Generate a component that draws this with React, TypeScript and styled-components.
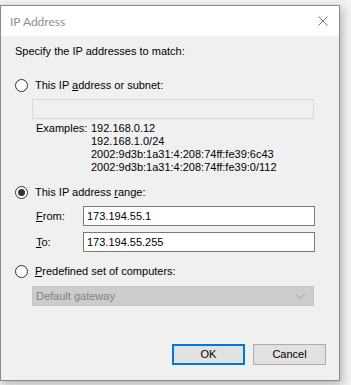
import React from "react";
import styled, { createGlobalStyle } from "styled-components";

const Global = createGlobalStyle`
  html, body { margin: 0; padding: 0; background: #f2f2f2; }
  body { font-family: "Liberation Sans", Arial, sans-serif; font-size: 11px; color: #000; }
  * { box-sizing: border-box; }
`;

const Page = styled.div`
  width: 351px;
  height: 385px;
  padding-top: 5px;
  overflow: hidden;
`;

const Dialog = styled.div`
  width: 340px;
  height: 376px;
  border: 1px solid #8a8a8a;
  background: #f0f0f0;
  box-shadow: 2px 3px 9px rgba(0, 0, 0, 0.28);
  display: flex;
  flex-direction: column;
`;

const TitleBar = styled.div`
  height: 30px;
  background: #fff;
  display: flex;
  align-items: center;
  justify-content: space-between;
  padding: 0 10px 0 9px;
  flex-shrink: 0;
`;

const Title = styled.span`
  color: #8f8f8f;
  font-family: Lato, "Liberation Sans", sans-serif;
  font-size: 12px;
  line-height: 15px;
`;

const Close = styled.svg`
  width: 10px;
  height: 10px;
  margin-right: 1px;
`;

const Client = styled.div`
  flex: 1;
  display: flex;
  flex-direction: column;
  padding: 8px 0 0 14px;
`;

const Text = styled.div<{ $mt?: number }>`
  line-height: 15px;
  height: 15px;
  margin-top: ${(p) => p.$mt ?? 0}px;
  white-space: nowrap;
`;

const RadioRow = styled.div<{ $mt: number }>`
  display: flex;
  align-items: center;
  gap: 7px;
  height: 15px;
  margin-top: ${(p) => p.$mt}px;
  line-height: 15px;
`;

const RadioCircle = styled.span<{ $checked?: boolean }>`
  width: 13px;
  height: 13px;
  border-radius: 50%;
  border: 1px solid #333;
  background: #fff;
  display: inline-flex;
  align-items: center;
  justify-content: center;
  flex-shrink: 0;
  &::after {
    content: "";
    width: 7px;
    height: 7px;
    border-radius: 50%;
    background: #333;
    display: ${(p) => (p.$checked ? "block" : "none")};
  }
`;

const U = styled.span`
  text-decoration: underline;
  text-underline-offset: 1px;
`;

const Indented = styled.div<{ $mt: number }>`
  margin-left: 17px;
  margin-top: ${(p) => p.$mt}px;
`;

const Field = styled.div<{ $disabled?: boolean; $w: number }>`
  width: ${(p) => p.$w}px;
  height: 20px;
  border: 1px solid ${(p) => (p.$disabled ? "#d9d9d9" : "#7a7a7a")};
  background: ${(p) => (p.$disabled ? "#f0f0f0" : "#fff")};
  padding: 0 3px;
  line-height: 18px;
  white-space: nowrap;
`;

const Examples = styled.div`
  display: grid;
  grid-template-columns: 55px auto;
  margin-left: 21px;
  margin-top: 3px;
  line-height: 13px;
`;

const ExampleValues = styled.div`
  display: flex;
  flex-direction: column;
`;

const RangeRow = styled.div<{ $mt: number }>`
  display: flex;
  align-items: center;
  margin-left: 21px;
  margin-top: ${(p) => p.$mt}px;
`;

const RangeLabel = styled.span`
  width: 47px;
  line-height: 15px;
`;

const Select = styled.div`
  width: 282px;
  height: 20px;
  margin-left: 17px;
  margin-top: 7px;
  background: #cccccc;
  border: 1px solid #c4c4c4;
  color: #838383;
  display: flex;
  align-items: center;
  justify-content: space-between;
  padding: 0 8px 0 3px;
  line-height: 18px;
`;

const Buttons = styled.div`
  display: flex;
  justify-content: flex-end;
  gap: 8px;
  margin-top: auto;
  margin-bottom: 15px;
  padding-right: 13px;
`;

const Button = styled.div<{ $primary?: boolean }>`
  width: 73px;
  height: 21px;
  background: #e1e1e1;
  border: ${(p) => (p.$primary ? "2px solid #0078d7" : "1px solid #adadad")};
  display: flex;
  align-items: center;
  justify-content: center;
  line-height: 15px;
`;

export default function App() {
  return (
    <>
      <Global />
      <Page>
        <Dialog>
          <TitleBar>
            <Title>IP Address</Title>
            <Close viewBox="0 0 10 10">
              <path d="M0.5 0.5 L9.5 9.5 M9.5 0.5 L0.5 9.5" stroke="#7a7a7a" strokeWidth="1" />
            </Close>
          </TitleBar>
          <Client>
            <Text>Specify the IP addresses to match:</Text>
            <RadioRow $mt={19}>
              <RadioCircle />
              <span>
                This IP <U>a</U>ddress or subnet:
              </span>
            </RadioRow>
            <Indented $mt={6}>
              <Field $disabled $w={282} />
            </Indented>
            <Examples>
              <span>Examples:</span>
              <ExampleValues>
                <span>192.168.0.12</span>
                <span>192.168.1.0/24</span>
                <span>2002:9d3b:1a31:4:208:74ff:fe39:6c43</span>
                <span>2002:9d3b:1a31:4:208:74ff:fe39:0/112</span>
              </ExampleValues>
            </Examples>
            <RadioRow $mt={11}>
              <RadioCircle $checked />
              <span>
                This IP address <U>r</U>ange:
              </span>
            </RadioRow>
            <RangeRow $mt={6}>
              <RangeLabel>
                <U>F</U>rom:
              </RangeLabel>
              <Field $w={232}>173.194.55.1</Field>
            </RangeRow>
            <RangeRow $mt={6}>
              <RangeLabel>
                <U>T</U>o:
              </RangeLabel>
              <Field $w={232}>173.194.55.255</Field>
            </RangeRow>
            <RadioRow $mt={12}>
              <RadioCircle />
              <span>
                <U>P</U>redefined set of computers:
              </span>
            </RadioRow>
            <Select>
              <span>Default gateway</span>
              <svg width="9" height="5" viewBox="0 0 9 5">
                <path d="M0.5 0.5 L4.5 4.5 L8.5 0.5" stroke="#a0a0a0" fill="none" />
              </svg>
            </Select>
            <Buttons>
              <Button $primary>OK</Button>
              <Button>Cancel</Button>
            </Buttons>
          </Client>
        </Dialog>
      </Page>
    </>
  );
}
